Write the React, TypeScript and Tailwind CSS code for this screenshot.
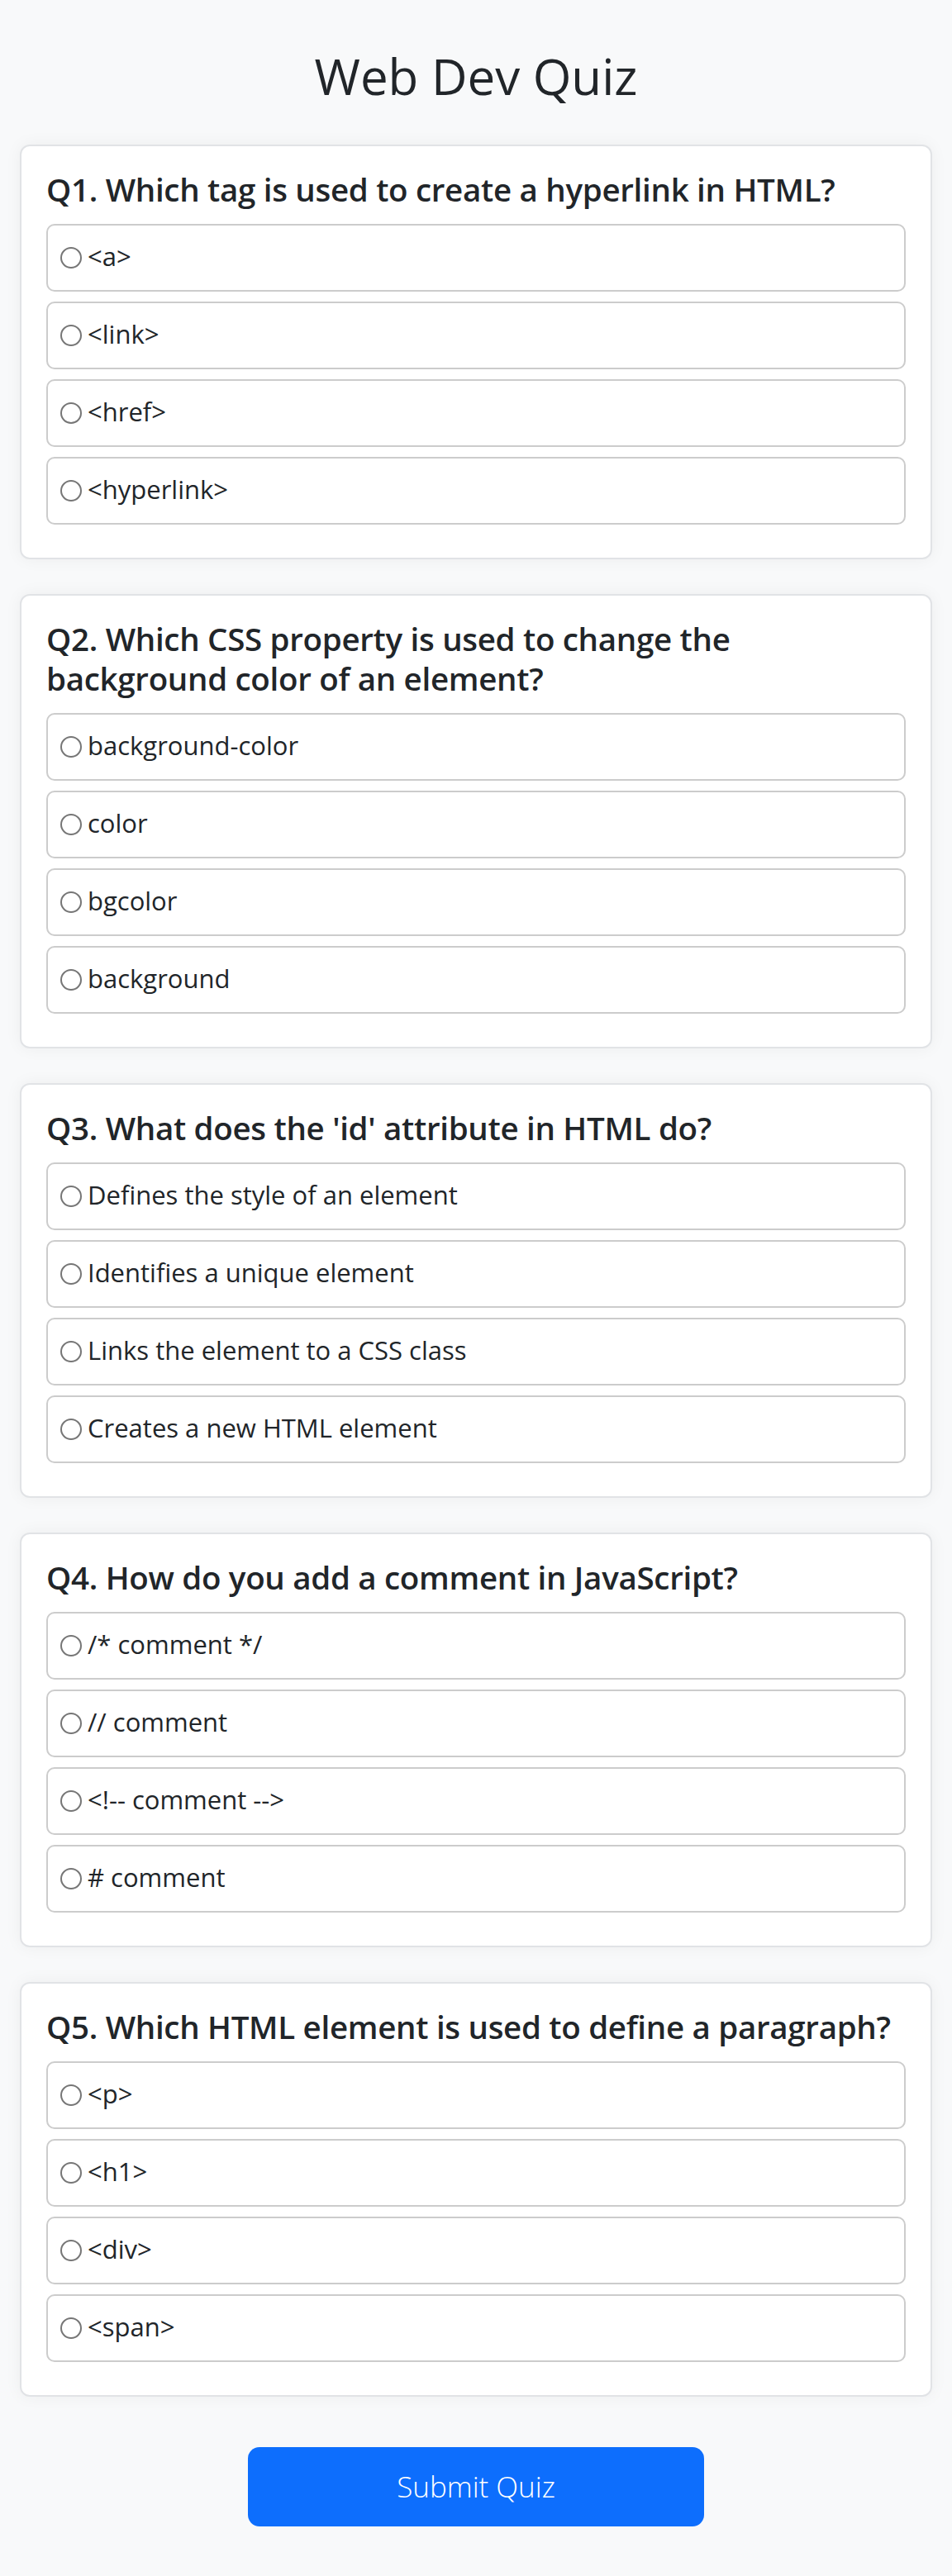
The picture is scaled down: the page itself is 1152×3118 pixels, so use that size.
import React from "react";

const questions = [
  {
    q: "Q1. Which tag is used to create a hyperlink in HTML?",
    options: ["<a>", "<link>", "<href>", "<hyperlink>"],
  },
  {
    q: "Q2. Which CSS property is used to change the background color of an element?",
    options: ["background-color", "color", "bgcolor", "background"],
  },
  {
    q: "Q3. What does the 'id' attribute in HTML do?",
    options: [
      "Defines the style of an element",
      "Identifies a unique element",
      "Links the element to a CSS class",
      "Creates a new HTML element",
    ],
  },
  {
    q: "Q4. How do you add a comment in JavaScript?",
    options: ["/* comment */", "// comment", "<!-- comment -->", "# comment"],
  },
  {
    q: "Q5. Which HTML element is used to define a paragraph?",
    options: ["<p>", "<h1>", "<div>", "<span>"],
  },
];

export default function App() {
  return (
    <div
      className="min-h-[3118px] bg-[#f8f9fa] text-[#212529]"
      style={{ fontFamily: '"Open Sans", "Noto Sans", sans-serif' }}
    >
      <h2 className="text-center text-[60px] leading-[77px] font-normal pt-[54px] pb-[44px]">
        Web Dev Quiz
      </h2>
      <div className="mx-[24px] flex flex-col gap-[42px]">
        {questions.map((item, qi) => (
          <div
            key={qi}
            className="bg-white border-2 border-[#e1e3e6] rounded-[12px] shadow-[0_0_20px_rgba(0,0,0,0.05)] pt-[28px] px-[30px] pb-[28px]"
          >
            <h5 className="text-[38.5px] leading-[48px] font-semibold mb-[18px] tracking-[-0.3px]">
              {item.q}
            </h5>
            <div className="flex flex-col">
              {item.options.map((opt, oi) => (
                <label
                  key={oi}
                  className="h-[82px] mb-[12px] border-2 border-[#cccccc] rounded-[10px] bg-white flex items-start pl-[15px] pt-[13px]"
                >
                  <input
                    type="radio"
                    name={`q${qi}`}
                    className="appearance-none shrink-0 w-[26px] h-[26px] mt-[13px] rounded-full border-2 border-[#767676] bg-white"
                  />
                  <span className="ml-[7px] text-[31px] leading-[48px]">{opt}</span>
                </label>
              ))}
            </div>
          </div>
        ))}
      </div>
      <div className="flex justify-center pt-[61px] pb-[60px]">
        <button className="w-[552px] h-[96px] bg-[#0d6efd] rounded-[14px] text-white text-[35px] font-light flex items-center justify-center">
          Submit Quiz
        </button>
      </div>
    </div>
  );
}
